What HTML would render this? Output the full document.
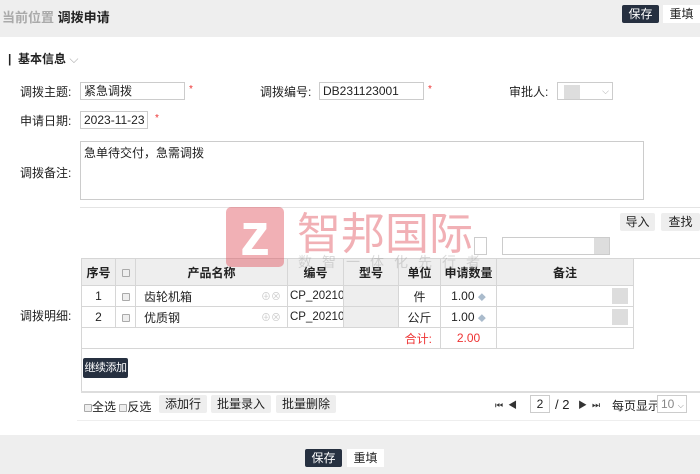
<!DOCTYPE html>
<html><head><meta charset="utf-8"><style>
*{margin:0;padding:0;box-sizing:border-box}
body{width:700px;height:474px;position:relative;overflow:hidden;background:#fff;font-family:"Liberation Sans","Noto Sans CJK SC",sans-serif;font-size:12px;color:#222}
.a{position:absolute;white-space:nowrap}
.inp{position:absolute;border:1px solid #ccc;background:#fff;font-size:12px;padding:0 3px;line-height:16px;height:18px;white-space:nowrap;overflow:hidden}
.btnd{position:absolute;background:#263040;color:#fff;border-radius:2px;text-align:center;line-height:18px;height:18px;white-space:nowrap;overflow:hidden}
.btnw{position:absolute;background:#fff;color:#222;text-align:center;line-height:18px;height:18px}
.btng{position:absolute;background:#eee;color:#222;text-align:center;line-height:18px;height:18px;border-radius:2px;white-space:nowrap}
.red{color:#e33}
table{position:absolute;left:81px;top:258px;border-collapse:collapse;width:553px;table-layout:fixed}
td{border:1px solid #d6d6d6;height:21px;text-align:center;font-size:12px;white-space:nowrap;overflow:hidden}
tr.h td{background:#eee;height:27px;font-weight:bold}
.cb{display:inline-block;width:8px;height:8px;border:1px solid #aaa;background:#eee;border-radius:1px;vertical-align:middle}
</style></head><body>
<div class="a" style="left:0;top:0;width:700px;height:37px;background:#eee"></div>
<div class="a" style="left:2px;top:7px;font-size:13px;color:#aaa;font-weight:bold">当前位置 <span style="color:#222">调拨申请</span></div>
<div class="btnd" style="left:622px;top:5px;width:37px">保存</div>
<div class="btnw" style="left:663px;top:5px;width:37px">重填</div>

<div class="a" style="left:8px;top:50px;font-weight:bold">| &nbsp;基本信息 <span style="color:#aaa;font-weight:normal">⌵</span></div>

<div class="a" style="left:20px;top:83px">调拨主题:</div>
<div class="inp" style="left:80px;top:82px;width:105px">紧急调拨</div>
<div class="a red" style="left:189px;top:84px;font-size:10px">*</div>
<div class="a" style="left:260px;top:83px">调拨编号:</div>
<div class="inp" style="left:319px;top:82px;width:105px">DB231123001</div>
<div class="a red" style="left:428px;top:84px;font-size:10px">*</div>
<div class="a" style="left:509px;top:83px">审批人:</div>
<div class="inp" style="left:557px;top:82px;width:56px"><span style="display:inline-block;width:16px;height:14px;background:#ddd;margin-left:3px;vertical-align:middle"></span><span style="float:right;color:#aaa;font-size:9px">⌵</span></div>
<div class="a" style="left:20px;top:112px">申请日期:</div>
<div class="inp" style="left:80px;top:111px;width:68px">2023-11-23</div>
<div class="a red" style="left:155px;top:113px;font-size:10px">*</div>

<div class="a" style="left:20px;top:164px">调拨备注:</div>
<div class="inp" style="left:80px;top:141px;width:564px;height:59px;padding:3px">急单待交付，急需调拨</div>
<div class="a" style="left:80px;top:207px;width:620px;height:1px;background:#e4e4e4"></div>

<div class="btng" style="left:620px;top:213px;width:35px">导入</div>
<div class="btng" style="left:661px;top:213px;width:39px">查找</div>
<div class="inp" style="left:474px;top:237px;width:13px"></div>
<div class="inp" style="left:502px;top:237px;width:108px"></div>
<div class="a" style="left:594px;top:238px;width:15px;height:16px;background:#ddd"></div>

<div class="a" style="left:81px;top:258px;width:619px;height:134px;border:1px solid #d6d6d6;border-right:none"></div>
<div class="a" style="left:20px;top:307px">调拨明细:</div>
<table>
<tr class="h"><td style="width:34px">序号</td><td style="width:20px"><span class="cb"></span></td><td style="width:152px">产品名称</td><td style="width:56px">编号</td><td style="width:55px">型号</td><td style="width:42px">单位</td><td style="width:56px">申请数量</td><td>备注</td></tr>
<tr><td>1</td><td><span class="cb"></span></td><td style="text-align:left;padding-left:8px">齿轮机箱<span style="float:right;color:#ccc;font-size:10px;margin-right:6px">⊕⊗</span></td><td style="text-align:left;padding-left:2px;font-size:11.5px">CP_20210</td><td style="background:#eee"></td><td>件</td><td>1.00 <span style="color:#abc;font-size:8px">◆</span></td><td></td></tr>
<tr><td>2</td><td><span class="cb"></span></td><td style="text-align:left;padding-left:8px">优质钢<span style="float:right;color:#ccc;font-size:10px;margin-right:6px">⊕⊗</span></td><td style="text-align:left;padding-left:2px;font-size:11.5px">CP_20210</td><td style="background:#eee"></td><td>公斤</td><td>1.00 <span style="color:#abc;font-size:8px">◆</span></td><td></td></tr>
<tr><td colspan="6" style="text-align:right;padding-right:8px;color:#e33">合计:</td><td style="color:#e33">2.00</td><td></td></tr>
</table>
<div class="a" style="left:612px;top:288px;width:16px;height:16px;background:#ddd"></div>
<div class="a" style="left:612px;top:309px;width:16px;height:16px;background:#ddd"></div>
<div class="btnd" style="left:83px;top:358px;width:45px;height:20px;line-height:20px;font-size:11px;letter-spacing:-0.5px">继续添加</div>
<div class="a" style="left:81px;top:391px;width:619px;height:2px;background:#ddd"></div>

<div class="a" style="left:84px;top:398px"><span class="cb"></span>全选 <span class="cb"></span>反选</div>
<div class="btng" style="left:159px;top:395px;width:48px">添加行</div>
<div class="btng" style="left:211px;top:395px;width:60px">批量录入</div>
<div class="btng" style="left:276px;top:395px;width:60px">批量删除</div>
<div class="a" style="left:495px;top:398px;font-size:9px;color:#333">⏮ &nbsp;◀</div>
<div class="inp" style="left:530px;top:395px;width:20px;text-align:center">2</div>
<div class="a" style="left:555px;top:397px;font-size:13px">/ 2</div>
<div class="a" style="left:578px;top:398px;font-size:9px;color:#333">▶ &nbsp;⏭</div>
<div class="a" style="left:612px;top:397px">每页显示</div>
<div class="inp" style="left:657px;top:395px;width:30px;color:#888">10 <span style="font-size:8px">⌵</span></div>
<div class="a" style="left:77px;top:420px;width:623px;height:1px;background:#eee"></div>

<div class="a" style="left:0;top:435px;width:700px;height:39px;background:#eee"></div>
<div class="btnd" style="left:305px;top:449px;width:37px">保存</div>
<div class="btnw" style="left:347px;top:449px;width:37px">重填</div>

<div class="a" style="left:226px;top:207px;width:58px;height:60px;background:rgba(225,80,90,.45);border-radius:5px;color:#fff;font-size:60px;font-weight:bold;text-align:center;line-height:56px">z</div>
<div class="a" style="left:297px;top:198px;font-size:44px;color:rgba(225,80,90,.45);white-space:nowrap">智邦国际</div>
<div class="a" style="left:298px;top:252px;font-size:14px;color:rgba(150,150,150,.35);letter-spacing:10px;white-space:nowrap">数智一体化先行者</div>
</body></html>
